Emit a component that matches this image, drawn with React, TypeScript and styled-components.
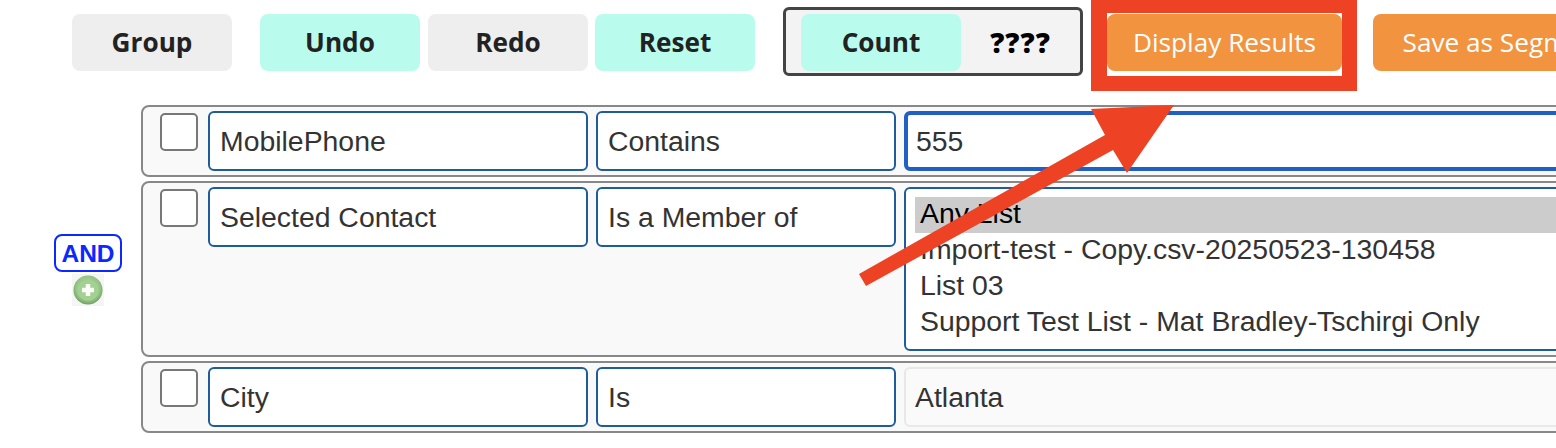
import React from "react";
import styled, { createGlobalStyle } from "styled-components";

const GlobalStyle = createGlobalStyle`
  html, body {
    margin: 0;
    padding: 0;
    background: #fff;
  }
`;

const Page = styled.div`
  position: relative;
  width: 1556px;
  height: 448px;
  overflow: hidden;
  background: #fff;
`;

const Toolbar = styled.div`
  display: flex;
  align-items: flex-start;
  height: 69px;
  padding: 7px 0 0 72px;
  width: 1700px;
`;

const Button = styled.button<{ $tone?: "grey" | "mint" | "orange"; $gap?: number; $width?: number }>`
  flex: none;
  width: ${(p) => p.$width ?? 160}px;
  height: 57px;
  margin: 7px 0 0 ${(p) => p.$gap ?? 0}px;
  padding: 0 0 2px;
  border: 0;
  border-radius: 8px;
  font-family: "Open Sans", sans-serif;
  font-size: 26.2px;
  font-weight: ${(p) => (p.$tone === "orange" ? 400 : 700)};
  white-space: nowrap;
  color: ${(p) => (p.$tone === "orange" ? "#fff" : "#222")};
  background: ${(p) =>
    p.$tone === "mint" ? "#b9fcee" : p.$tone === "orange" ? "#f29340" : "#eeeeee"};
`;

const CountBox = styled.div`
  flex: none;
  display: flex;
  align-items: flex-start;
  box-sizing: border-box;
  width: 300px;
  height: 69px;
  margin-left: 28px;
  padding-left: 15px;
  border: 3px solid #444;
  border-radius: 6px;
  background: #f3f3f3;

  ${Button} {
    margin-top: 4px;
  }
`;

const CountValue = styled.span`
  flex: 1;
  align-self: center;
  text-align: center;
  font-family: "Open Sans", sans-serif;
  font-size: 28px;
  font-weight: 800;
  letter-spacing: 1px;
  color: #000;
`;

const Rules = styled.div`
  display: flex;
  align-items: center;
  margin-top: 29px;
  width: 1700px;
`;

const Joiner = styled.div`
  flex: none;
  display: flex;
  flex-direction: column;
  align-items: center;
  width: 68px;
  margin: 0 19px 0 54px;
  padding-top: 2px;
  gap: 2px;
`;

const AndBadge = styled.div`
  box-sizing: border-box;
  width: 68px;
  height: 38px;
  border: 2px solid #0a28ff;
  border-radius: 8px;
  font-family: "Liberation Sans", sans-serif;
  font-size: 24.5px;
  font-weight: 700;
  line-height: 36px;
  text-align: center;
  color: #0a28ff;
`;

const RuleList = styled.div`
  flex: 1;
  display: flex;
  flex-direction: column;
  gap: 4px;
`;

const Rule = styled.div`
  display: flex;
  align-items: flex-start;
  gap: 8px;
  padding: 4px 4px 4px 17px;
  border: 2px solid #888;
  border-radius: 8px;
  background: #f9f9f9;
`;

const Check = styled.div`
  flex: none;
  box-sizing: border-box;
  width: 38px;
  height: 38px;
  margin: 2px 2px 0 0;
  border: 2px solid #777;
  border-radius: 5px;
  background: #fff;
`;

const Field = styled.div<{ $width?: number; $state?: "focus" | "muted" }>`
  flex: ${(p) => (p.$width ? "none" : "1")};
  box-sizing: border-box;
  width: ${(p) => (p.$width ? `${p.$width}px` : "auto")};
  height: 60px;
  padding: 0 ${(p) => (p.$width ? 10 : p.$state === "focus" ? 8 : 9)}px;
  border: ${(p) => (p.$state === "focus" ? 4 : 2)}px solid
    ${(p) => (p.$state === "focus" ? "#2060c4" : p.$state === "muted" ? "#e8e8e8" : "#1f5c9c")};
  border-radius: 6px;
  background: ${(p) => (p.$state === "muted" ? "#fafafa" : "#fff")};
  font-family: "Liberation Sans", sans-serif;
  font-size: 28.4px;
  line-height: ${(p) => (p.$state === "focus" ? 52 : 56)}px;
  color: #333;
  white-space: nowrap;
`;

const ListBox = styled.div`
  flex: 1;
  box-sizing: border-box;
  height: 164px;
  padding: 8px 0 0 9px;
  border: 2px solid #1f5c9c;
  border-radius: 6px;
  background: #fff;
`;

const Option = styled.div<{ $selected?: boolean }>`
  height: 36px;
  padding-left: 5px;
  font-family: "Liberation Sans", sans-serif;
  font-size: 28.4px;
  line-height: 33px;
  white-space: nowrap;
  color: ${(p) => (p.$selected ? "#000" : "#333")};
  background: ${(p) => (p.$selected ? "#cccccc" : "transparent")};
`;

const Highlight = styled.div`
  position: absolute;
  top: -2px;
  left: 1091px;
  box-sizing: border-box;
  width: 266px;
  height: 93px;
  border: 15px solid #ee4224;
  border-left-width: 16px;
`;

const Arrow = styled.svg`
  position: absolute;
  top: 0;
  left: 0;
`;

const PlusIcon = () => (
  <svg width="32" height="32" viewBox="0 0 32 32" aria-label="Add">
    <defs>
      <radialGradient id="plusFill" cx="50%" cy="45%" r="55%">
        <stop offset="0%" stopColor="#b4d8a4" />
        <stop offset="75%" stopColor="#97c687" />
        <stop offset="100%" stopColor="#6f9f60" />
      </radialGradient>
    </defs>
    <rect width="32" height="32" fill="#f5f5f5" />
    <circle cx="16" cy="16" r="14.5" fill="url(#plusFill)" />
    <circle cx="16" cy="16" r="10.5" fill="#a3d093" />
    <path d="M13.75 10h4.5v3.75H22v4.5h-3.75V22h-4.5v-3.75H10v-4.5h3.75z" fill="#fbfdf9" />
  </svg>
);

export default function App() {
  return (
    <Page>
      <GlobalStyle />
      <Toolbar>
        <Button>Group</Button>
        <Button $tone="mint" $gap={28}>
          Undo
        </Button>
        <Button $gap={8}>Redo</Button>
        <Button $tone="mint" $gap={7}>
          Reset
        </Button>
        <CountBox>
          <Button $tone="mint">Count</Button>
          <CountValue>????</CountValue>
        </CountBox>
        <Button $tone="orange" $gap={24} $width={235}>
          Display Results
        </Button>
        <Button $tone="orange" $gap={31} $width={264}>
          Save as Segment
        </Button>
      </Toolbar>
      <Rules>
        <Joiner>
          <AndBadge>AND</AndBadge>
          <PlusIcon />
        </Joiner>
        <RuleList>
          <Rule>
            <Check />
            <Field $width={380}>MobilePhone</Field>
            <Field $width={300}>Contains</Field>
            <Field $state="focus">555</Field>
          </Rule>
          <Rule>
            <Check />
            <Field $width={380}>Selected Contact</Field>
            <Field $width={300}>Is a Member of</Field>
            <ListBox>
              <Option $selected>Any List</Option>
              <Option>Import-test - Copy.csv-20250523-130458</Option>
              <Option>List 03</Option>
              <Option>Support Test List - Mat Bradley-Tschirgi Only</Option>
            </ListBox>
          </Rule>
          <Rule>
            <Check />
            <Field $width={380}>City</Field>
            <Field $width={300}>Is</Field>
            <Field $state="muted">Atlanta</Field>
          </Rule>
        </RuleList>
      </Rules>
      <Highlight />
      <Arrow width="1556" height="448" viewBox="0 0 1556 448">
        <polygon
          points="859,274 1105,135 1091,109 1174,105 1127,173 1113,150 866,286"
          fill="#ee4224"
        />
      </Arrow>
    </Page>
  );
}
